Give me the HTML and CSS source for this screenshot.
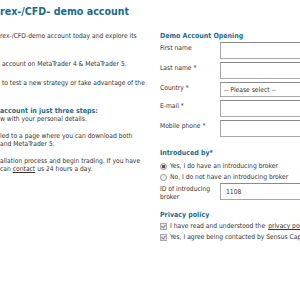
FILE: index.html
```html
<!DOCTYPE html>
<html lang="en">
  <head>
    <meta charset="UTF-8" />
    <title>Forex-/CFD- demo account</title>
    <link rel="stylesheet" href="styles.css">
  </head>
  <body>
    <div class="page">
      <div class="intro">
        <h1 class="title">rex-/CFD- demo account</h1>
        <p class="para">rex-/CFD-demo account today and explore its<br />&nbsp;</p>
        <p class="para">&nbsp;account on MetaTrader 4 &amp; MetaTrader 5.</p>
        <p class="para">&nbsp;to test a new strategy or take advantage of the<br />&nbsp;</p>
        <h3 class="steps">account in just three steps:</h3>
        <p class="step">w with your personal details.</p>
        <p class="step">led to a page where you can download both<br />and MetaTrader 5.</p>
        <p class="step">allation process and begin trading. If you have<br />can <a href="#">contact</a> us 24 hours a day.</p>
      </div>

      <form class="form">
        <h2 class="form-title">Demo Account Opening</h2>
        <div class="row">
          <label>First name</label>
          <input type="text" />
        </div>
        <div class="row">
          <label>Last name *</label>
          <input type="text" />
        </div>
        <div class="row">
          <label>Country *</label>
          <select><option>-- Please select --</option></select>
        </div>
        <div class="row">
          <label>E-mail *</label>
          <input type="text" />
        </div>
        <div class="row">
          <label>Mobile phone *</label>
          <input type="text" />
        </div>

        <h2 class="form-title section">Introduced by*</h2>
        <label class="option"><span class="radio checked"></span>Yes, I do have an introducing broker</label>
        <label class="option"><span class="radio"></span>No, I do not have an introducing broker</label>
        <div class="row broker">
          <label>ID of introducing broker</label>
          <input type="text" value="1108" />
        </div>

        <h2 class="form-title section privacy">Privacy policy</h2>
        <label class="option"><span class="check"></span>I have read and understood the <a href="#">privacy policy</a></label>
        <label class="option"><span class="check"></span>Yes, I agree being contacted by Sensus Capital</label>
      </form>
    </div>
  </body>
</html>
```

FILE: styles.css
```css
* {
  margin: 0;
  padding: 0;
  box-sizing: border-box;
}

body {
  font-family: "DejaVu Sans Condensed", "DejaVu Sans", sans-serif;
  font-size: 6.7px;
  color: #333;
  background: white;
  overflow: hidden;
  width: 300px;
  height: 300px;
}

a {
  color: #333;
}

.page {
  display: flex;
  width: 420px;
}

.intro {
  width: 160px;
  flex: none;
  padding-top: 4px;
}

.title {
  font-size: 10.6px;
  font-weight: bold;
  color: #1b6a8c;
  line-height: 15px;
  margin-bottom: 13px;
}

.para {
  line-height: 9px;
  margin-bottom: 10px;
}

.steps {
  font-size: 7px;
  font-weight: bold;
  color: #1b6a8c;
  line-height: 8px;
}

.step {
  line-height: 8.5px;
  margin-bottom: 8px;
}

.form {
  flex: none;
  width: 260px;
  padding-top: 32px;
}

.form-title {
  font-size: 7px;
  font-weight: bold;
  color: #1b6a8c;
  line-height: 8px;
  margin-bottom: 2px;
}

.form-title.section {
  margin-top: 12px;
  margin-bottom: 4px;
}

.form-title.privacy {
  margin-top: 10px;
  margin-bottom: 2px;
}

.row {
  display: grid;
  grid-template-columns: 60px 100px;
  align-items: start;
  margin-bottom: 3px;
}

.row label {
  line-height: 8px;
  padding-top: 2px;
}

.row.broker {
  margin-top: 1px;
}

.row.broker label {
  padding-top: 2px;
}

.row input,
.row select {
  height: 17px;
  border: 1px solid #a8a8a8;
  border-top-color: #8a8a8a;
  font-family: inherit;
  font-size: 6.7px;
  color: #333;
  padding: 0 5px;
  background: white;
  appearance: none;
}

.row select {
  height: 15px;
  padding: 0 3px;
}

.option {
  display: flex;
  align-items: center;
  gap: 3px;
  line-height: 10px;
  height: 10px;
  margin-bottom: 1px;
}

.radio {
  width: 7px;
  height: 7px;
  border-radius: 50%;
  border: 1px solid #999;
  background: #eee;
}

.radio.checked {
  background: radial-gradient(circle, #555 0 1.5px, #ddd 2px);
}

.check {
  width: 7px;
  height: 7px;
  border: 1px solid #aaa;
  background: #e6e6e6;
  position: relative;
}

.check::after {
  content: "";
  position: absolute;
  left: 1px;
  top: 0;
  width: 2px;
  height: 3px;
  border: solid #888;
  border-width: 0 1px 1px 0;
  transform: rotate(40deg);
}
```
